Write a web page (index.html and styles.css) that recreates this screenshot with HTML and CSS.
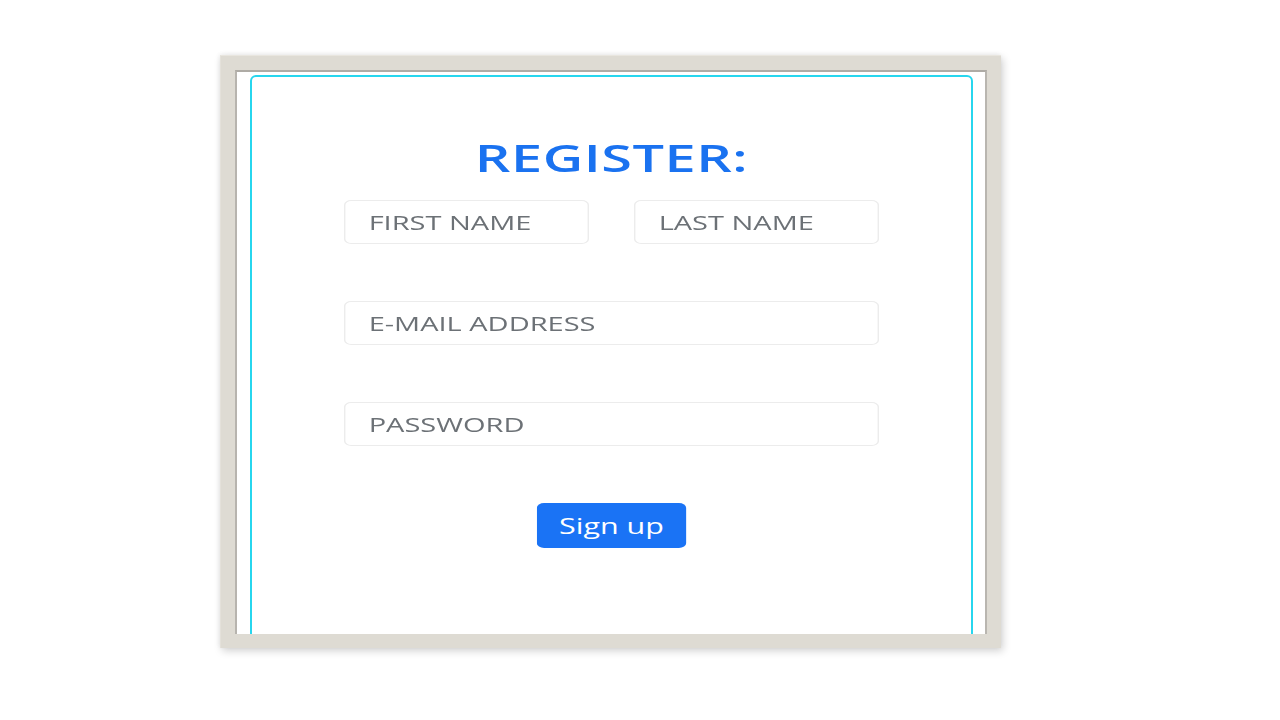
FILE: index.html
```html
<!DOCTYPE html>
<html lang="en">
<head>
<meta charset="utf-8">
<title>Register</title>
<link rel="stylesheet" href="styles.css">
</head>
<body>
  <div class="page">
    <div class="frame">
      <div class="frame-inner">
        <div class="card">
          <form class="form-body">
            <h1 class="title">REGISTER:</h1>
            <div class="row">
              <input class="field half" type="text" placeholder="FIRST NAME">
              <input class="field half" type="text" placeholder="LAST NAME">
            </div>
            <div class="row">
              <input class="field full" type="email" placeholder="E-MAIL ADDRESS">
            </div>
            <div class="row">
              <input class="field full" type="password" placeholder="PASSWORD">
            </div>
            <div class="actions">
              <button class="btn" type="button">Sign up</button>
            </div>
          </form>
        </div>
      </div>
    </div>
  </div>
</body>
</html>
```
FILE: styles.css
```css
* { box-sizing: border-box; }
html, body {
  margin: 0;
  padding: 0;
  background: #ffffff;
  width: 1280px;
  height: 720px;
  overflow: hidden;
  font-family: "Open Sans", "Noto Sans", sans-serif;
}
.page {
  padding: 55px 0 0 220px;
}
.frame {
  width: 781px;
  height: 593px;
  background: #dedbd3;
  padding: 14px;
  box-shadow: 2px 3px 8px rgba(0, 0, 0, 0.18), -1px -1px 4px rgba(0, 0, 0, 0.05);
  border-top: 1px solid #e9e6df;
  border-left: 1px solid #e4e1da;
}
.frame-inner {
  width: 100%;
  height: 100%;
  background: #ffffff;
  border-top: 2px solid #aeaba5;
  border-left: 2px solid #b7b4ae;
  border-right: 2px solid #b9b6b0;
  padding: 3px 12px 0 13px;
  overflow: hidden;
}
.card {
  height: 600px;
  border: 2px solid #27d6ee;
  border-radius: 6px;
  display: flex;
  flex-direction: column;
  align-items: center;
  padding-top: 57px;
}
.form-body {
  width: 369px;
  display: flex;
  flex-direction: column;
  align-items: center;
  transform: scaleX(1.45);
  transform-origin: center top;
}
.title {
  margin: 0 0 20px 0;
  font-size: 38.5px;
  font-weight: 600;
  color: #1a72f0;
  line-height: 46px;
  letter-spacing: 0.35px;
}
.row {
  display: flex;
  justify-content: space-between;
  width: 369px;
  margin-bottom: 57px;
}
.field {
  height: 44px;
  border: 1px solid #ececec;
  border-radius: 5px;
  background: #ffffff;
  padding: 0 16px;
  font-family: "Open Sans", "Noto Sans", sans-serif;
  font-size: 20px;
  color: #5f6368;
  outline: none;
}
.field::placeholder {
  color: #6c7176;
  opacity: 1;
}
.half { width: 169px; }
.full { width: 369px; }
.btn {
  width: 103.5px;
  height: 45px;
  border: none;
  border-radius: 5px;
  background: #1a73f5;
  color: #ffffff;
  font-family: "Open Sans", "Noto Sans", sans-serif;
  font-size: 21px;
  font-weight: 500;
  cursor: pointer;
}
```
